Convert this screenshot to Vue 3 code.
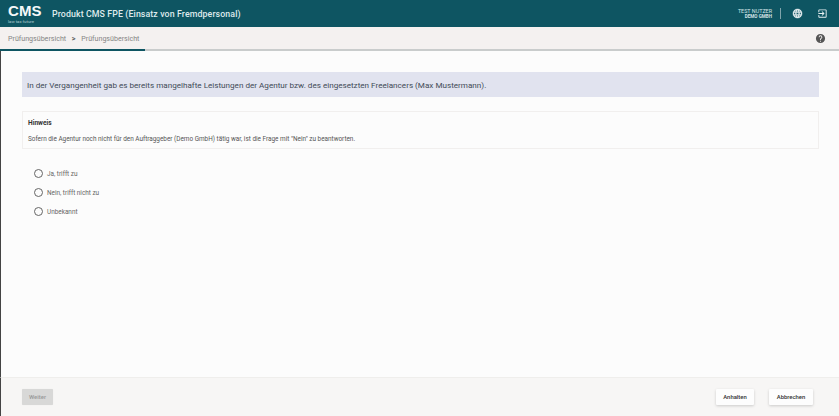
<script setup>
const options = ['Ja, trifft zu', 'Nein, trifft nicht zu', 'Unbekannt']
</script>

<template>
  <div class="page">
    <header class="top">
      <div class="logo">
        <span class="logo-main">CMS</span>
        <span class="logo-sub">law tax future</span>
      </div>
      <div class="title">Produkt CMS FPE (Einsatz von Fremdpersonal)</div>
      <div class="spacer"></div>
      <div class="user">
        <div class="user-name">TEST NUTZER</div>
        <div class="user-org">DEMO GMBH</div>
      </div>
      <div class="sep"></div>
      <svg class="globe" width="11" height="11" viewBox="0 0 24 24"><path fill="#f0f5f6" stroke="#f0f5f6" stroke-width="0.8" d="M12 2a10 10 0 1 0 0 20 10 10 0 0 0 0-20zm6.9 6h-2.95a15.7 15.7 0 0 0-1.38-3.56A8 8 0 0 1 18.92 8zM12 4.04c.83 1.2 1.48 2.53 1.91 3.96h-3.82c.43-1.43 1.08-2.76 1.91-3.96zM4.26 14a8.2 8.2 0 0 1 0-4h3.38a16.5 16.5 0 0 0 0 4H4.26zm.82 2h2.95c.32 1.25.78 2.45 1.38 3.56A8 8 0 0 1 5.08 16zm2.95-8H5.08a8 8 0 0 1 4.33-3.56A15.7 15.7 0 0 0 8.03 8zM12 19.96c-.83-1.2-1.48-2.53-1.91-3.96h3.82c-.43 1.43-1.08 2.76-1.91 3.96zM14.34 14H9.66a14.7 14.7 0 0 1 0-4h4.68a14.7 14.7 0 0 1 0 4zm.25 5.56c.6-1.11 1.06-2.31 1.38-3.56h2.95a8 8 0 0 1-4.33 3.56zM16.36 14a16.5 16.5 0 0 0 0-4h3.38a8.2 8.2 0 0 1 0 4h-3.38z"/></svg>
      <svg class="exit" width="11" height="11" viewBox="0 0 24 24"><path fill="#e8f0f2" d="M10.09 15.59 11.5 17l5-5-5-5-1.41 1.41L12.67 11H3v2h9.67l-2.58 2.59zM19 3H5a2 2 0 0 0-2 2v4h2V5h14v14H5v-4H3v4a2 2 0 0 0 2 2h14a2 2 0 0 0 2-2V5a2 2 0 0 0-2-2z"/></svg>
    </header>

    <nav class="crumbs">
      <span>Prüfungsübersicht</span>
      <span class="chev">&gt;</span>
      <span>Prüfungsübersicht</span>
      <div class="spacer"></div>
      <svg class="help" width="11" height="11" viewBox="0 0 24 24"><path fill="#555" d="M12 2a10 10 0 1 0 0 20 10 10 0 0 0 0-20zm1 17h-2v-2h2v2zm2.07-7.75-.9.92C13.45 12.9 13 13.5 13 15h-2v-.5c0-1.1.45-2.1 1.17-2.83l1.24-1.26A2 2 0 1 0 10 9H8a4 4 0 1 1 8 0c0 .88-.36 1.68-.93 2.25z"/></svg>
    </nav>
    <div class="progress"><div class="progress-fill"></div></div>

    <main class="main">
      <div class="question">In der Vergangenheit gab es bereits mangelhafte Leistungen der Agentur bzw. des eingesetzten Freelancers (Max Mustermann).</div>
      <section class="hint">
        <div class="hint-title">Hinweis</div>
        <div class="hint-text">Sofern die Agentur noch nicht für den Auftraggeber (Demo GmbH) tätig war, ist die Frage mit "Nein" zu beantworten.</div>
      </section>
      <div class="options">
        <label v-for="o in options" :key="o" class="option">
          <span class="radio"></span>
          <span>{{ o }}</span>
        </label>
      </div>
    </main>

    <footer class="foot">
      <button class="btn disabled">Weiter</button>
      <div class="spacer"></div>
      <button class="btn">Anhalten</button>
      <button class="btn">Abbrechen</button>
    </footer>
  </div>
</template>

<style>
html, body { margin: 0; padding: 0; }
</style>

<style scoped>
.page {
  width: 839px;
  height: 416px;
  display: flex;
  flex-direction: column;
  overflow: hidden;
  font-family: Roboto, "Liberation Sans", sans-serif;
  background: #fcfcfc;
}
.spacer { flex: 1; }
.top {
  height: 27px;
  flex: none;
  background: #0e5562;
  display: flex;
  align-items: center;
  padding: 0 11px 0 8px;
  color: #e8f0f2;
}
.logo {
  display: flex;
  flex-direction: column;
  width: 33px;
  margin-bottom: 2px;
}
.logo-main {
  font-family: "Liberation Sans", sans-serif;
  font-weight: 700;
  font-size: 15px;
  letter-spacing: 0.1px;
  line-height: normal;
  color: #f4f8f9;
}
.logo-sub {
  font-size: 4.3px;
  line-height: normal;
  color: #b9d0d5;
  white-space: nowrap;
}
.title {
  margin-left: 11px;
  font-size: 8.8px;
  font-weight: 500;
  letter-spacing: 0.1px;
  color: #dfeaec;
}
.user { text-align: right; font-size: 5.4px; line-height: 6px; }
.user-name { color: #d5e3e6; }
.user-org { font-weight: 700; font-size: 4.6px; color: #d5e3e6; }
.sep { width: 1px; height: 11px; background: #7fa4ab; margin: 0 11px 0 8px; }
.exit { margin-left: 14px; }
.crumbs {
  height: 22px;
  flex: none;
  background: #f4f1f0;
  display: flex;
  align-items: center;
  padding: 0 13px 0 8px;
  font-size: 7.1px;
  color: #858585;
}
.chev { margin: 0 6px 0 5.5px; font-weight: 700; color: #555; }
.progress { height: 2px; flex: none; background: #c9cccc; }
.progress-fill { width: 145px; height: 100%; background: #0e5562; }
.main {
  flex: 1;
  padding: 21px 20px 0 21px;
  border-left: 1px solid #444;
  min-height: 0;
}
.question {
  height: 25px;
  background: #e1e3ef;
  display: flex;
  align-items: center;
  padding-left: 5px;
  font-size: 8.12px;
  color: #414b57;
}
.hint {
  margin-top: 14px;
  height: 38px;
  box-sizing: border-box;
  border: 1px solid #f1efee;
  padding: 6px 5px;
}
.hint-title { font-size: 6.6px; font-weight: 700; color: #333; line-height: 10px; }
.hint-text { font-size: 6.4px; color: #555; line-height: 8px; margin-top: 7px; }
.options {
  margin-top: 20px;
  margin-left: 12px;
  display: flex;
  flex-direction: column;
  gap: 10px;
}
.option {
  display: flex;
  align-items: center;
  height: 9px;
  font-size: 6.4px;
  color: #666;
}
.radio {
  width: 7px;
  height: 7px;
  border: 1px solid #666;
  border-radius: 50%;
  margin-right: 4px;
  flex: none;
}
.foot {
  height: 39px;
  flex: none;
  box-sizing: border-box;
  background: #f7f6f5;
  border-top: 1px solid #efeeec;
  border-left: 1px solid #444;
  display: flex;
  align-items: center;
  padding: 0 26px 0 21px;
  gap: 15px;
}
.btn {
  height: 16px;
  padding: 0;
  width: 38px;
  border: none;
  border-radius: 1px;
  background: #fdfdfd;
  box-shadow: 0 1px 3px rgba(0, 0, 0, 0.18);
  font-family: inherit;
  font-size: 5.9px;
  font-weight: 500;
  color: #333;
}
.btn.disabled {
  width: 31px;
  background: #d8d8d7;
  color: #999;
  box-shadow: 0 0 1px rgba(0, 0, 0, 0.1);
}
.btn:last-child { width: 44px; }
</style>
